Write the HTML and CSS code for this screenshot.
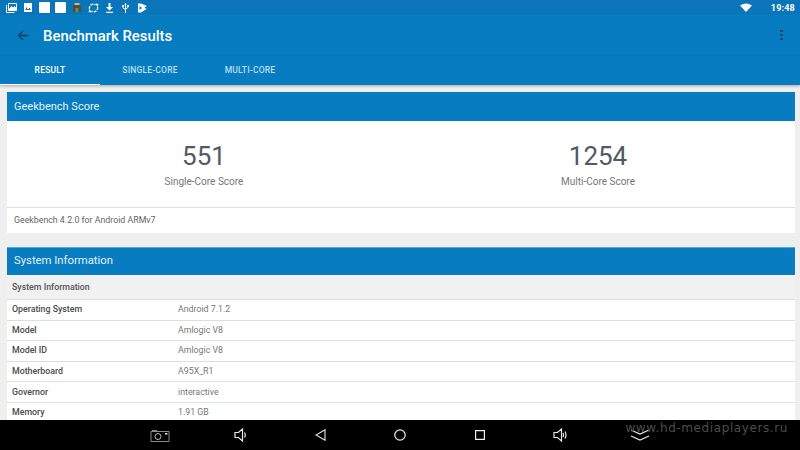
FILE: index.html
```html
<!DOCTYPE html>
<html lang="en">
<head>
    <meta charset="UTF-8">
    <title>Benchmark Results</title>
    <link rel="stylesheet" href="styles.css">
</head>
<body>
    <div class="screen">
        <div class="status-bar">
            <div class="status-icons">
                <svg class="s-gallery" width="11" height="10" viewBox="0 0 11 10"><path d="M2.500.5h8v7h-8z" fill="none" stroke="#fff"/><path d="M.5 2v7.500h8" fill="none" stroke="#fff"/><path d="M3 6l2.500-3 1.500 1.500L8.500 3 10 4.500V7H3z" fill="#fff"/></svg>
                <svg class="s-photo" width="8" height="9" viewBox="0 0 8 9"><path d="M0 0h8v9H0z" fill="#fff"/><path d="M1.500 6h5v1h-5zM2 4.500h1V6H2zM5 5h1v1H5z" fill="#0a75b9"/></svg>
                <span class="white-box"></span>
                <span class="white-box"></span>
                <svg class="s-tv" width="8" height="9" viewBox="0 0 8 9"><path d="M0 2h8v7H0z" fill="#5a4a3c"/><path d="M1.500 0h5v2h-5z" fill="#c9b79a"/><path d="M2.500 5h3v4h-3z" fill="#4f9a4a"/></svg>
                <svg class="s-sync" width="11" height="10" viewBox="0 0 11 10"><path d="M1.500 6a3.800 3.800 0 0 1 6-4M9.500 4a3.800 3.800 0 0 1-6 4" fill="none" stroke="#fff" stroke-width="1.300" stroke-dasharray="3 1"/><path d="M7.500.5L10.500 1l-1 3zM3.500 9.500L.5 9l1-3z" fill="#fff"/></svg>
                <svg class="s-down" width="7" height="10" viewBox="0 0 7 10"><path d="M2.500 0h2v4H7L3.500 7.500 0 4h2.500zM0 8.800h7V10H0z" fill="#fff"/></svg>
                <svg class="s-usb" width="7" height="10" viewBox="0 0 7 10"><path d="M3.500 1v9M1 3v2l2.500 1.500M6 3v1.500L3.500 6" fill="none" stroke="#fff"/><path d="M2.300 1.500L3.500 0l1.200 1.500zM0 2h2v1.500H0zM5 2h2v1.500H5z" fill="#fff"/></svg>
                <svg class="s-flag" width="9" height="10" viewBox="0 0 9 10"><path d="M0 .5h3l6 2.500-2.500 1.500L8.500 6 3 9.500H0z" fill="#fff"/><path d="M1.500 3L4 5 1.500 7z" fill="#0a75b9"/></svg>
            </div>
            <div class="status-right">
                <svg width="12" height="9" viewBox="0 0 12 9"><path d="M0 2.500Q6-1.500 12 2.500L6 9z" fill="#fff"/></svg>
                <span class="clock">19:48</span>
            </div>
        </div>
        <div class="toolbar">
            <svg class="back" width="12" height="11" viewBox="0 0 12 11"><path d="M11.500 5.500H1.500M6 1L1.500 5.500 6 10" fill="none" stroke="#0b3f63" stroke-width="1.300"/></svg>
            <span class="title">Benchmark Results</span>
            <span class="menu"><i></i><i></i><i></i></span>
        </div>
        <div class="tabs">
            <div class="tab active">RESULT</div>
            <div class="tab">SINGLE-CORE</div>
            <div class="tab">MULTI-CORE</div>
        </div>
        <div class="content">
            <div class="card">
                <div class="card-head">Geekbench Score</div>
                <div class="scores">
                    <div class="score">
                        <div class="num">551</div>
                        <div class="lbl">Single-Core Score</div>
                    </div>
                    <div class="score">
                        <div class="num">1254</div>
                        <div class="lbl">Multi-Core Score</div>
                    </div>
                </div>
                <div class="card-foot">Geekbench 4.2.0 for Android ARMv7</div>
            </div>
            <div class="card">
                <div class="card-head sys">System Information</div>
                <div class="sub-head">System Information</div>
                <div class="row"><div class="key">Operating System</div><div class="val">Android 7.1.2</div></div>
                <div class="row"><div class="key">Model</div><div class="val">Amlogic V8</div></div>
                <div class="row"><div class="key">Model ID</div><div class="val">Amlogic V8</div></div>
                <div class="row"><div class="key">Motherboard</div><div class="val">A95X_R1</div></div>
                <div class="row"><div class="key">Governor</div><div class="val">interactive</div></div>
                <div class="row"><div class="key">Memory</div><div class="val">1.91 GB</div></div>
            </div>
        </div>
        <div class="nav-bar">
            <svg width="20" height="13" viewBox="0 0 20 13"><path d="M1 2.500h18v10H1z" fill="none" stroke="#8a8a8a"/><path d="M2 1.500h5" stroke="#8a8a8a"/><circle cx="8" cy="7.500" r="3" fill="none" stroke="#bbb"/><path d="M15 4h2.500v1.500H15z" fill="#ddd"/></svg>
            <svg width="13" height="14" viewBox="0 0 13 14"><path d="M1 4.500h3.500L8.500 1v12l-4-3.500H1zM10.500 4.500q1.500 2.500 0 5" fill="none" stroke="#e8e8e8" stroke-width="1.200"/></svg>
            <svg width="11" height="12" viewBox="0 0 11 12"><path d="M10 .8v10.400L1 6z" fill="none" stroke="#e8e8e8" stroke-width="1.100"/></svg>
            <svg width="12" height="12" viewBox="0 0 12 12"><circle cx="6" cy="6" r="5.200" fill="none" stroke="#eee" stroke-width="1.200"/></svg>
            <svg width="10" height="10" viewBox="0 0 10 10"><path d="M.6.6h8.800v8.800H.6z" fill="none" stroke="#eee" stroke-width="1.200"/></svg>
            <svg width="15" height="14" viewBox="0 0 15 14"><path d="M1 4.500h3.500L8.500 1v12l-4-3.500H1zM10 5q1 2 0 4M12 3.500q2 3.500 0 7" fill="none" stroke="#e8e8e8" stroke-width="1.200"/></svg>
            <svg width="20" height="14" viewBox="0 0 20 14"><path d="M1 2l9 4 9-4M1 8l9 4 9-4" fill="none" stroke="#e8e8e8" stroke-width="1.200"/></svg>
        </div>
        <div class="watermark">www.hd-mediaplayers.ru</div>
    </div>
</body>
</html>
```

FILE: styles.css
```css
* {
    box-sizing: border-box;
}
body {
    margin: 0;
    font-family: Roboto, "Liberation Sans", sans-serif;
}
.screen {
    position: relative;
    width: 800px;
    height: 450px;
    display: flex;
    flex-direction: column;
    overflow: hidden;
    background-color: #efefef;
}
.status-bar {
    height: 15px;
    flex: none;
    display: flex;
    justify-content: space-between;
    align-items: center;
    padding: 0 5px 0 6px;
    background-color: #0a75b9;
}
.status-icons {
    display: flex;
    align-items: center;
}
.s-gallery {
    margin-right: 7px;
}
.s-photo {
    margin-right: 7px;
}
.white-box {
    width: 11px;
    height: 11px;
    margin-right: 5px;
    border-radius: 1px;
    background-color: #fff;
}
.white-box + .white-box {
    margin-right: 7px;
}
.s-tv {
    margin-right: 7px;
}
.s-sync {
    margin-right: 7px;
}
.s-down {
    margin-right: 9px;
}
.s-usb {
    margin-right: 9px;
}
.status-right {
    display: flex;
    align-items: center;
    gap: 19px;
}
.clock {
    color: #fff;
    font-size: 9px;
    font-weight: 700;
    letter-spacing: 0.2px;
}
.toolbar {
    height: 41px;
    flex: none;
    display: flex;
    align-items: center;
    padding: 0 17px 0 17px;
    background-color: #077cc1;
}
.title {
    margin-left: 14px;
    color: #fff;
    font-size: 14.900px;
    font-weight: 500;
}
.menu {
    margin-left: auto;
    margin-bottom: 2px;
    display: flex;
    flex-direction: column;
    gap: 2px;
}
.menu i {
    width: 3px;
    height: 2px;
    background-color: #0d4a73;
}
.tabs {
    height: 29px;
    flex: none;
    display: flex;
    background-color: #077cc1;
    box-shadow: 0 1px 3px rgba(0, 0, 0, 0.3);
    position: relative;
}
.tab {
    width: 100px;
    padding-top: 9px;
    text-align: center;
    font-size: 8.500px;
    font-weight: 500;
    color: #bcdcf0;
    letter-spacing: 0.2px;
}
.tab.active {
    color: #fff;
    border-bottom: 1.500px solid #fff;
}
.content {
    flex: 1;
    min-height: 0;
    overflow: hidden;
    padding: 7px 5px 0 7px;
}
.card {
    background-color: #fff;
    margin-bottom: 14px;
}
.card-head {
    height: 29px;
    padding: 0 7px 1px;
    display: flex;
    align-items: center;
    background-color: #077cc1;
    color: #e6f2fa;
    font-size: 11px;
}
.card-head.sys {
    height: 28px;
    padding-bottom: 2px;
    font-size: 11.300px;
    border-top: 1px solid #5aa6d6;
}
.scores {
    height: 87px;
    display: flex;
    border-bottom: 1px solid #e0e0e0;
}
.score {
    width: 50%;
    padding-top: 20px;
    text-align: center;
}
.num {
    font-size: 26px;
    line-height: 30px;
    color: #505a64;
}
.lbl {
    margin-top: 5px;
    font-size: 10px;
    color: #777;
}
.card-foot {
    height: 25px;
    padding: 0 7px 1px;
    display: flex;
    align-items: center;
    font-size: 8.800px;
    color: #666;
}
.sub-head {
    height: 25px;
    padding: 0 5px 1px;
    display: flex;
    align-items: center;
    background-color: #f1f1f1;
    border-bottom: 1px solid #dedede;
    font-size: 8.800px;
    font-weight: 500;
    color: #555;
}
.row {
    height: 20.600px;
    display: flex;
    align-items: center;
    padding: 0 5px 1px;
    border-bottom: 1px solid #dedede;
    font-size: 8.800px;
}
.key {
    width: 166px;
    font-weight: 500;
    color: #4a4a4a;
}
.val {
    color: #777;
}
.nav-bar {
    height: 30px;
    flex: none;
    display: grid;
    grid-template-columns: repeat(7, 80px);
    justify-content: center;
    justify-items: center;
    align-items: center;
    background-color: #000;
}
.watermark {
    position: absolute;
    right: 12px;
    top: 421px;
    font-family: "DejaVu Sans", sans-serif;
    font-size: 12px;
    letter-spacing: 0.6px;
    color: #4d4d4d;
}
```
